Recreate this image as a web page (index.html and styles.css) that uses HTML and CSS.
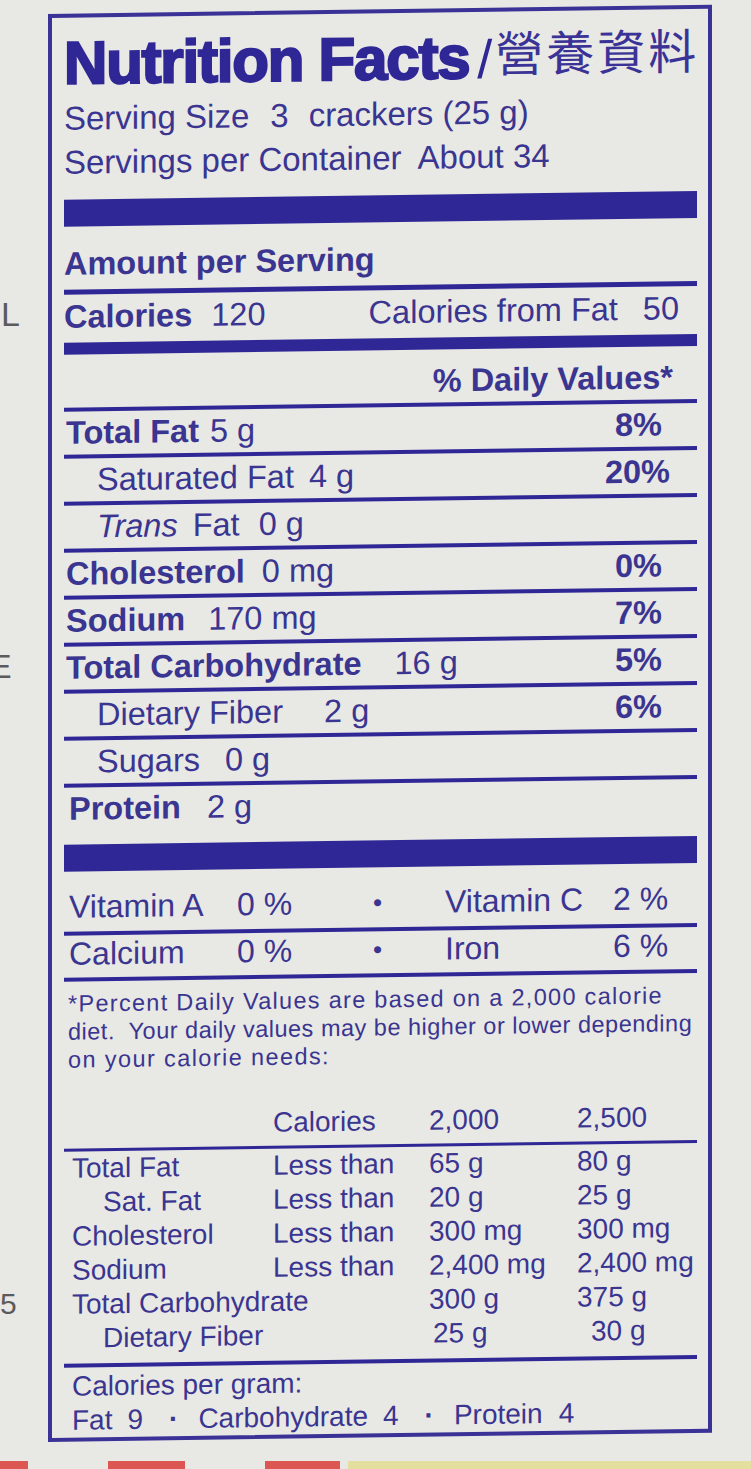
FILE: index.html
```html
<!DOCTYPE html>
<html lang="en">
<head>
<meta charset="utf-8">
<title>Nutrition Facts</title>
<link rel="stylesheet" href="styles.css">
</head>
<body>
<div class="page">
  <div class="gutter">
    <span class="stray stray-l">L</span>
    <span class="stray stray-e">E</span>
    <span class="stray stray-5">5</span>
  </div>
  <section class="label">
    <h1 class="title"><span class="title-en">Nutrition Facts</span><span class="title-slash">/</span><span class="title-zh" lang="zh-Hant">營養資料</span></h1>
    <p class="serving"><span>Serving Size</span><span class="ml21">3</span><span class="ml20">crackers (25 g)</span></p>
    <p class="serving"><span>Servings per Container</span><span class="ml16">About 34</span></p>
    <div class="bar"></div>
    <div class="amount">Amount per Serving</div>
    <div class="calories"><span><b>Calories</b><span class="ml19">120</span></span><span>Calories from Fat<span class="ml25">50</span></span></div>
    <div class="dv">% Daily Values*</div>

    <div class="row"><span><b>Total Fat</b><span class="ml11">5 g</span></span><b class="pct">8%</b></div>
    <div class="row sub"><span>Saturated Fat<span class="ml15">4 g</span></span><b class="pct pct-wide">20%</b></div>
    <div class="row sub"><span><i>Trans</i><span class="ml15">Fat</span><span class="ml19">0 g</span></span></div>
    <div class="row"><span><b>Cholesterol</b><span class="ml17">0 mg</span></span><b class="pct">0%</b></div>
    <div class="row"><span><b>Sodium</b><span class="ml23">170 mg</span></span><b class="pct">7%</b></div>
    <div class="row"><span><b>Total Carbohydrate</b><span class="ml33">16 g</span></span><b class="pct">5%</b></div>
    <div class="row sub"><span>Dietary Fiber<span class="ml41">2 g</span></span><b class="pct">6%</b></div>
    <div class="row sub"><span>Sugars<span class="ml25">0 g</span></span></div>
    <div class="row last"><span><b>Protein</b><span class="ml26">2 g</span></span></div>
    <div class="bar bar-low"></div>

    <div class="vit vit-a"><span>Vitamin A</span><span>0 %</span><span class="dot">•</span><span>Vitamin C</span><span>2 %</span></div>
    <div class="vit vit-b"><span>Calcium</span><span>0 %</span><span class="dot">•</span><span>Iron</span><span>6 %</span></div>

    <div class="note">
      <p class="note-1">*Percent Daily Values are based on a 2,000 calorie</p>
      <p class="note-2">diet.&nbsp; Your daily values may be higher or lower depending</p>
      <p class="note-3">on your calorie needs:</p>
    </div>

    <div class="dvt">
      <div class="dvt-head"><span></span><span>Calories</span><span>2,000</span><span>2,500</span></div>
      <div class="dvt-body">
        <div class="dvt-row"><span>Total Fat</span><span>Less than</span><span>65 g</span><span>80 g</span></div>
        <div class="dvt-row"><span class="in">Sat. Fat</span><span>Less than</span><span>20 g</span><span>25 g</span></div>
        <div class="dvt-row"><span>Cholesterol</span><span>Less than</span><span>300 mg</span><span>300 mg</span></div>
        <div class="dvt-row"><span>Sodium</span><span>Less than</span><span>2,400 mg</span><span>2,400 mg</span></div>
        <div class="dvt-row"><span>Total Carbohydrate</span><span></span><span>300 g</span><span>375 g</span></div>
        <div class="dvt-row"><span class="in">Dietary Fiber</span><span></span><span class="nudge-a">25 g</span><span class="nudge-b">30 g</span></div>
      </div>
      <div class="cpg">
        <p>Calories per gram:</p>
        <p>Fat<span class="ml15">9</span><span class="mid">·</span>Carbohydrate<span class="ml15">4</span><span class="mid">·</span>Protein<span class="ml16">4</span></p>
      </div>
    </div>
  </section>
</div>
<div class="strip">
  <span class="red red-1"></span>
  <span class="red red-2"></span>
  <span class="red red-3"></span>
  <span class="yellow"></span>
</div>
</body>
</html>
```

FILE: styles.css
```css
* { box-sizing: border-box; margin: 0; padding: 0; }

html, body { width: 751px; height: 1469px; }

body {
  background: #e8e8e4;
  font-family: "Liberation Sans", Arial, sans-serif;
  color: #3a3590;
  overflow: hidden;
}

b { font-weight: 700; }
i { font-style: italic; }

.page { display: flex; height: 1461px; }

/* stray text of the neighbouring panel */
.gutter {
  width: 48px;
  flex: none;
  display: flex;
  flex-direction: column;
  align-items: flex-start;
  overflow: hidden;
  color: #5b5b5e;
  font-size: 34px;
  line-height: 34px;
}
.stray-l { margin-top: 297px; margin-left: 1px; }
.stray-e { margin-top: 318px; margin-left: -11px; }
.stray-5 { margin-top: 604px; margin-left: 0; font-size: 30px; }

/* the label */
.label {
  width: 664px;
  flex: none;
  align-self: flex-start;
  margin-top: 14px;
  border: 4px solid #3a3296;
  padding: 0 11px 0 12px;
  transform: skewY(-0.8deg);
  transform-origin: 0 0;
  display: flex;
  flex-direction: column;
}

.title {
  margin-top: 13px;
  height: 66px;
  line-height: 66px;
  font-size: 60px;
  font-weight: 700;
  white-space: nowrap;
  color: #2f2795;
}
.title-en { letter-spacing: -1.2px; -webkit-text-stroke: 2.2px #2f2795; }
.title-slash { font-weight: 400; font-size: 54px; margin-left: 8px; }
.title-zh {
  font-family: "Noto Sans CJK TC", "Noto Sans CJK SC", sans-serif;
  font-weight: 400;
  font-size: 48px;
  letter-spacing: 3px;
  margin-left: 3px;
  line-height: 40px;
  vertical-align: 6px;
  color: #3a3296;
}

.serving {
  font-size: 33px;
  line-height: 44px;
  white-space: nowrap;
}

.ml11 { margin-left: 11px; }
.ml15 { margin-left: 15px; }
.ml16 { margin-left: 16px; }
.ml17 { margin-left: 17px; }
.ml19 { margin-left: 19px; }
.ml20 { margin-left: 20px; }
.ml21 { margin-left: 21px; }
.ml23 { margin-left: 23px; }
.ml25 { margin-left: 25px; }
.ml26 { margin-left: 26px; }
.ml33 { margin-left: 33px; }
.ml41 { margin-left: 41px; }

.bar { height: 27px; margin-top: 15px; background: #2f2795; }
.bar-low { margin-top: 14px; }

.amount {
  font-size: 32.5px;
  font-weight: 700;
  line-height: 43px;
  padding-top: 16px;
  padding-bottom: 4px;
  border-bottom: 5px solid #2f2795;
}

.calories {
  display: flex;
  justify-content: space-between;
  font-size: 32.5px;
  line-height: 43px;
  padding: 1px 18px 4px 0;
  border-bottom: 12px solid #2f2795;
  white-space: nowrap;
}

.dv {
  font-size: 32.5px;
  font-weight: 700;
  line-height: 43px;
  text-align: right;
  padding: 10px 24px 0 0;
  border-bottom: 4px solid #2f2795;
}

.row {
  display: flex;
  justify-content: space-between;
  height: 47px;
  font-size: 32.5px;
  line-height: 43px;
  border-bottom: 4px solid #2f2795;
  white-space: nowrap;
  padding-left: 2px;
  padding-right: 35px;
}
.row.sub { padding-left: 33px; }
.row.last { height: 43px; border-bottom: 0; padding-left: 5px; }
.pct-wide { margin-right: -8px; }

.vit {
  display: grid;
  grid-template-columns: 168px 136px 72px 168px 1fr;
  font-size: 32px;
  line-height: 36px;
  padding-left: 5px;
  border-bottom: 4px solid #2f2795;
  white-space: nowrap;
}
.vit-a { padding-top: 17px; padding-bottom: 7px; }
.vit-b { padding-bottom: 6px; }
.dot { font-size: 26px; }

.note {
  margin-top: 8px;
  font-size: 23.5px;
  line-height: 28px;
  padding-left: 4px;
  white-space: nowrap;
}
.note-1 { letter-spacing: 1.3px; }
.note-2 { letter-spacing: 0.5px; }
.note-3 { letter-spacing: 1.4px; }

.dvt { margin-top: 35px; font-size: 28px; white-space: nowrap; }
.dvt-head, .dvt-row {
  display: grid;
  grid-template-columns: 209px 156px 148px 1fr;
  line-height: 34px;
}
.dvt-head { padding-bottom: 6px; border-bottom: 3px solid #2f2795; }
.dvt-body { padding-bottom: 8px; border-bottom: 4px solid #2f2795; }
.dvt-row > span:first-child { padding-left: 8px; }
.dvt-row > span.in { padding-left: 39px; }
.nudge-a { padding-left: 4px; }
.nudge-b { padding-left: 14px; }

.cpg { padding: 2px 0 0 8px; line-height: 34px; }
.mid { margin: 0 20px 0 26px; font-weight: 700; }

/* packaging visible under the label */
.strip { display: flex; height: 8px; }
.red { background: #dd5752; height: 8px; }
.red-1 { width: 28px; }
.red-2 { width: 77px; margin-left: 80px; }
.red-3 { width: 75px; margin-left: 80px; }
.yellow { flex: 1; margin-left: 8px; background: #e5df9f; }
```
